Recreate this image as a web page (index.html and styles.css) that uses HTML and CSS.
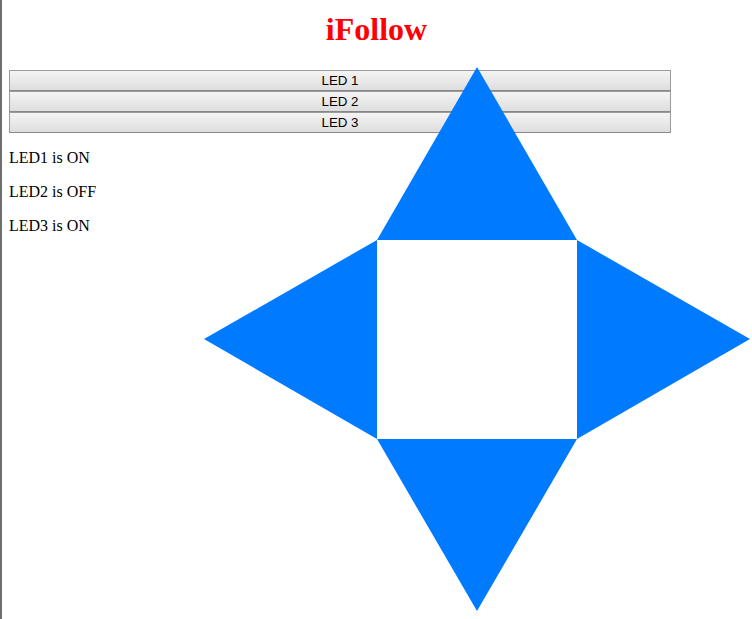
FILE: index.html
```html
<!DOCTYPE html>
<html lang="en">
<head>
  <meta charset="UTF-8" />
  <title>iFollow</title>
  <link rel="stylesheet" href="styles.css">
</head>
<body>
  <h1 class="title">iFollow</h1>

  <div class="leds">
    <button class="led-btn">LED 1</button>
    <button class="led-btn">LED 2</button>
    <button class="led-btn">LED 3</button>
  </div>

  <p class="status">LED1 is ON</p>
  <p class="status">LED2 is OFF</p>
  <p class="status">LED3 is ON</p>

  <!-- joystick pad -->
  <svg class="pad" width="546" height="544" viewBox="0 0 546 544">
    <polygon points="273,0 173,173 373,173" />
    <polygon points="0,272 173,173 173,372" />
    <polygon points="546,272 373,173 373,372" />
    <polygon points="273,544 173,372 373,372" />
  </svg>
</body>
</html>
```

FILE: styles.css
```css
html {
  height: 100%;
  border-left: 2px solid #6e6e6e;
  box-sizing: border-box;
}

body {
  margin: 0 8px 8px 7px;
  font-family: "Liberation Serif", serif;
  font-size: 16px;
  color: #000;
  background: #fff;
}

.title {
  margin: 11px 0 22px;
  text-align: center;
  color: #ff0000;
  font-size: 32px;
  font-weight: bold;
}

.leds {
  display: flex;
  flex-direction: column;
}

.led-btn {
  display: block;
  width: 662px;
  height: 21px;
  margin: 0;
  padding: 0;
  border: 1px solid #9a9a9a;
  border-bottom-color: #888;
  background: linear-gradient(#f4f4f4, #dedede);
  font-family: "Liberation Sans", Arial, sans-serif;
  font-size: 13.33px;
  color: #000;
}

.status {
  margin: 16px 0;
}

.pad {
  position: absolute;
  left: 204px;
  top: 67px;
  fill: #007bff;
}
```
